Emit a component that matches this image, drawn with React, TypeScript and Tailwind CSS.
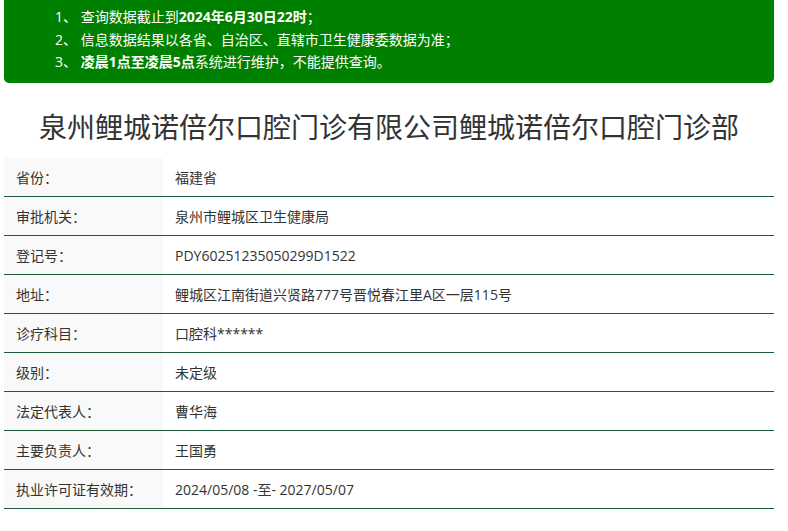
const rows: [string, string][] = [
  ["省份：", "福建省"],
  ["审批机关：", "泉州市鲤城区卫生健康局"],
  ["登记号：", "PDY60251235050299D1522"],
  ["地址：", "鲤城区江南街道兴贤路777号晋悦春江里A区一层115号"],
  ["诊疗科目：", "口腔科******"],
  ["级别：", "未定级"],
  ["法定代表人：", "曹华海"],
  ["主要负责人：", "王国勇"],
  ["执业许可证有效期：", "2024/05/08 -至- 2027/05/07"],
];

export default function App() {
  return (
    <div
      className="w-[788px] h-[531px] bg-white px-[4px] overflow-hidden"
      style={{ fontFamily: '"Open Sans", "Noto Sans CJK SC", sans-serif' }}
    >
      {/* Notice box */}
      <div className="w-[770px] h-[83px] bg-[#008000] rounded-b-[5px] pt-[6px] pl-[51px] text-white text-[14px] leading-[22.5px]">
        <p>
          1、 查询数据截止到<b>2024年6月30日22时</b>；
        </p>
        <p>2、 信息数据结果以各省、自治区、直辖市卫生健康委数据为准；</p>
        <p>
          3、 <b>凌晨1点至凌晨5点</b>系统进行维护，不能提供查询。
        </p>
      </div>

      {/* Title */}
      <h1 className="w-[770px] mt-[25px] mb-[12px] h-[38px] leading-[38px] text-center text-[28px] text-[#333]">
        泉州鲤城诺倍尔口腔门诊有限公司鲤城诺倍尔口腔门诊部
      </h1>

      {/* Info table */}
      <div className="w-[770px]">
        {rows.map(([label, value]) => (
          <div
            key={label}
            className="flex h-[39px] border-b border-[#1e5a36] text-[14px] text-[#333]"
          >
            <div className="w-[159px] bg-[#f9f9f9] pl-[12px] flex items-center">
              {label}
            </div>
            <div className="flex-1 pl-[12px] flex items-center">{value}</div>
          </div>
        ))}
      </div>
    </div>
  );
}
